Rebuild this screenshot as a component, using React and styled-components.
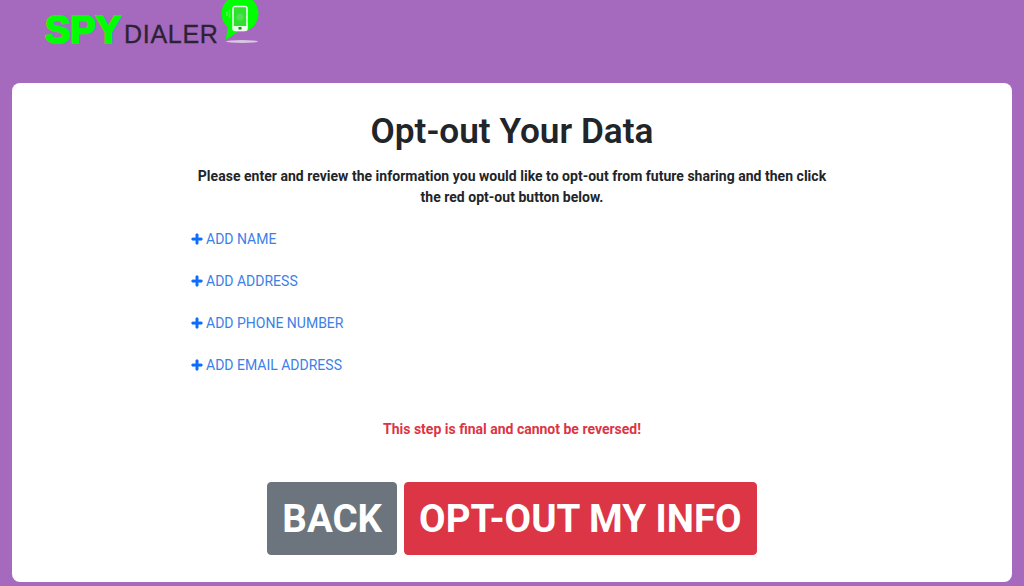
import React from "react";
import styled, { createGlobalStyle } from "styled-components";
import { FaPlus } from "react-icons/fa";

const GlobalStyle = createGlobalStyle`
  html, body {
    margin: 0;
    padding: 0;
    height: 586px;
    overflow: hidden;
    background-color: #a569bd;
    font-family: Roboto, "Liberation Sans", sans-serif;
    color: #212529;
  }
`;

const Page = styled.div`
  display: flex;
  flex-direction: column;
  height: 586px;
  padding: 0 12px 4px;
  box-sizing: border-box;
`;

const Header = styled.header`
  display: flex;
  align-items: flex-start;
  height: 83px;
  padding-left: 33px;
  flex-shrink: 0;
`;

const Logo = styled.div`
  display: flex;
  align-items: flex-start;
`;

const Spy = styled.span`
  font-family: "Liberation Sans", Arial, sans-serif;
  font-weight: 700;
  font-size: 38px;
  line-height: 38px;
  margin-top: 11px;
  color: #00ff00;
  -webkit-text-stroke: 2px #00ff00;
`;

const Dialer = styled.span`
  font-family: "Liberation Sans", Arial, sans-serif;
  font-size: 25px;
  line-height: 26px;
  margin: 21px 0 0 3px;
  color: #2b2233;
  letter-spacing: 0.7px;
  -webkit-text-stroke: 0.3px #2b2233;
`;

const Card = styled.main`
  flex: 1;
  display: flex;
  flex-direction: column;
  align-items: center;
  background-color: #fff;
  border-radius: 8px;
  padding-top: 24px;
`;

const Title = styled.h1`
  margin: 0 0 11px;
  font-size: 35.2px;
  line-height: 48px;
  font-weight: 600;
`;

const Intro = styled.p`
  margin: 0;
  width: 640px;
  text-align: center;
  font-size: 14px;
  line-height: 21px;
  font-weight: 700;
  letter-spacing: 0.02px;
`;

const AddList = styled.div`
  display: flex;
  flex-direction: column;
  gap: 21px;
  width: 642px;
  margin-top: 20px;
`;

const AddLink = styled.a`
  display: flex;
  align-items: center;
  gap: 3px;
  height: 21px;
  font-size: 14px;
  color: #3b7fe8;
  text-decoration: none;
  svg {
    width: 12px;
    height: 12px;
    color: #0d6efd;
    stroke: #0d6efd;
    stroke-width: 30;
  }
`;

const Warning = styled.p`
  margin: 44px 0 0;
  font-size: 14px;
  line-height: 21px;
  font-weight: 700;
  color: #dc3545;
`;

const Actions = styled.div`
  display: flex;
  gap: 7px;
  margin-top: 42px;
`;

const BigButton = styled.button`
  height: 73px;
  padding: 0 14px;
  border: 1px solid ${(p) => p.$color};
  border-radius: 4px;
  background-color: ${(p) => p.$color};
  color: #fff;
  font-family: inherit;
  font-size: 38.5px;
  font-weight: 700;
  cursor: pointer;
`;

const PhoneBadge = () => (
  <svg width="44" height="46" viewBox="0 0 44 46">
    <ellipse cx="23" cy="41.500" rx="16" ry="1.500" fill="#d9c8e2" />
    <circle cx="21" cy="13.500" r="18.500" fill="#00ff00" />
    <path d="M9 27L6.500 40L20 31z" fill="#00ff00" />
    <rect x="14" y="6.500" width="14" height="24" rx="2" fill="#2fe02f" stroke="#eaffea" strokeWidth="1.600" />
    <rect x="14" y="26" width="14" height="4.500" fill="#eaffea" />
    <circle cx="21" cy="17" r="3.500" fill="#55dd55" />
    <rect x="19.500" y="27" width="3" height="2.500" fill="#1a8a1a" />
    <path d="M10.500 9v9M8 11v5" stroke="#66e866" strokeWidth="1.400" fill="none" />
  </svg>
);

const links = ["ADD NAME", "ADD ADDRESS", "ADD PHONE NUMBER", "ADD EMAIL ADDRESS"];

const App = () => (
  <>
    <GlobalStyle />
    <Page>
      <Header>
        <Logo>
          <Spy>SPY</Spy>
          <Dialer>DIALER</Dialer>
          <PhoneBadge />
        </Logo>
      </Header>
      <Card>
        <Title>Opt-out Your Data</Title>
        <Intro>
          Please enter and review the information you would like to opt-out from future sharing and then click the red opt-out button below.
        </Intro>
        <AddList>
          {links.map((label) => (
            <AddLink href="#" key={label}>
              <FaPlus />
              {label}
            </AddLink>
          ))}
        </AddList>
        <Warning>This step is final and cannot be reversed!</Warning>
        <Actions>
          <BigButton $color="#6c757d">BACK</BigButton>
          <BigButton $color="#dc3545">OPT-OUT MY INFO</BigButton>
        </Actions>
      </Card>
    </Page>
  </>
);

export default App;
